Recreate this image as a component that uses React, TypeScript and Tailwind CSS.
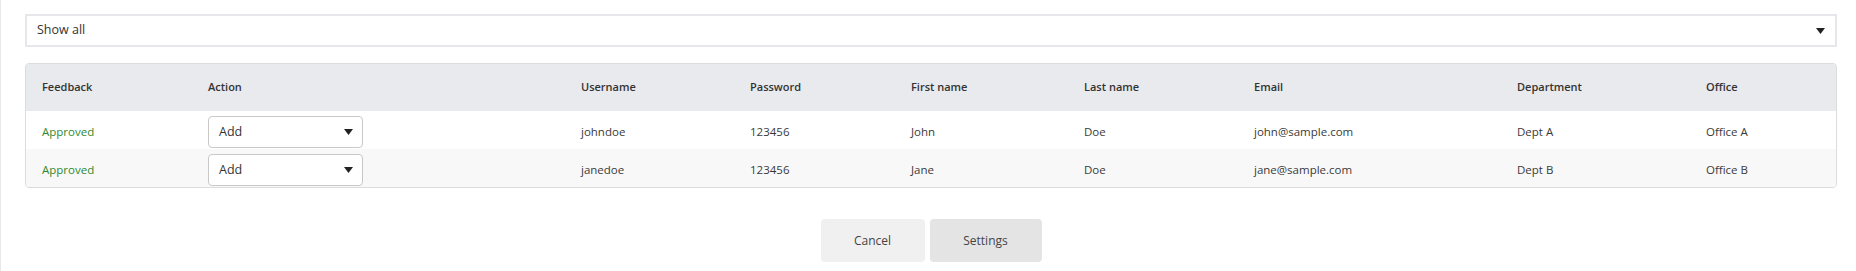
const columns: string[] = [
  "Feedback",
  "Action",
  "Username",
  "Password",
  "First name",
  "Last name",
  "Email",
  "Department",
  "Office",
];

const rows = [
  {
    username: "johndoe",
    password: "123456",
    first: "John",
    last: "Doe",
    email: "john@sample.com",
    dept: "Dept A",
    office: "Office A",
  },
  {
    username: "janedoe",
    password: "123456",
    first: "Jane",
    last: "Doe",
    email: "jane@sample.com",
    dept: "Dept B",
    office: "Office B",
  },
];

const gridCols =
  "grid grid-cols-[166px_373px_169px_161px_173px_170px_263px_189px_1fr]";

const Caret = () => (
  <svg width="9" height="6" viewBox="0 0 9 6" className="shrink-0">
    <path d="M0 0 L9 0 L4.5 6 Z" fill="#222" />
  </svg>
);

const App = () => {
  return (
    <div
      className="w-full h-[271px] bg-white border-l border-[#e8e8ec] pl-[24px] pr-[19px] pt-[14px] text-[#333]"
      style={{ fontFamily: '"Open Sans", sans-serif' }}
    >
      <div className="h-[33px] border-2 border-[#e6e7eb] flex items-center justify-between pl-[10px] pr-[10px] text-[12.5px] text-[#333]">
        <span>Show all</span>
        <Caret />
      </div>

      <div className="mt-4 border border-[#dcdcdc] rounded-[4px] overflow-hidden">
        <div className={`${gridCols} h-[47px] items-center bg-[#e9eaee]`}>
          {columns.map((name) => (
            <div key={name} className="pl-4 text-[11px] font-semibold text-[#333]">
              {name}
            </div>
          ))}
        </div>

        {rows.map((row, index) => (
          <div
            key={row.username}
            className={`${gridCols} h-[38px] items-center pt-[4px] text-[11.5px] text-[#3a3a3a] ${
              index % 2 === 1 ? "bg-[#f8f8f8]" : "bg-white"
            }`}
          >
            <div className="pl-4 text-[#2f8a2f]">Approved</div>
            <div className="pl-4">
              <div className="w-[155px] h-[32px] bg-white border border-[#c8c8c8] rounded-[4px] flex items-center justify-between pl-[10px] pr-[9px] text-[12.5px] text-[#333]">
                <span>Add</span>
                <Caret />
              </div>
            </div>
            <div className="pl-4">{row.username}</div>
            <div className="pl-4">{row.password}</div>
            <div className="pl-4">{row.first}</div>
            <div className="pl-4">{row.last}</div>
            <div className="pl-4">{row.email}</div>
            <div className="pl-4">{row.dept}</div>
            <div className="pl-4">{row.office}</div>
          </div>
        ))}
      </div>

      <div className="mt-[31px] flex justify-center gap-[5px]">
        <button className="w-[104px] h-[43px] bg-[#f0f0f0] rounded-[4px] text-[12px] text-[#444]">
          Cancel
        </button>
        <button className="w-[112px] h-[43px] bg-[#e4e4e4] rounded-[4px] text-[12px] text-[#444]">
          Settings
        </button>
      </div>
    </div>
  );
};

export default App;
